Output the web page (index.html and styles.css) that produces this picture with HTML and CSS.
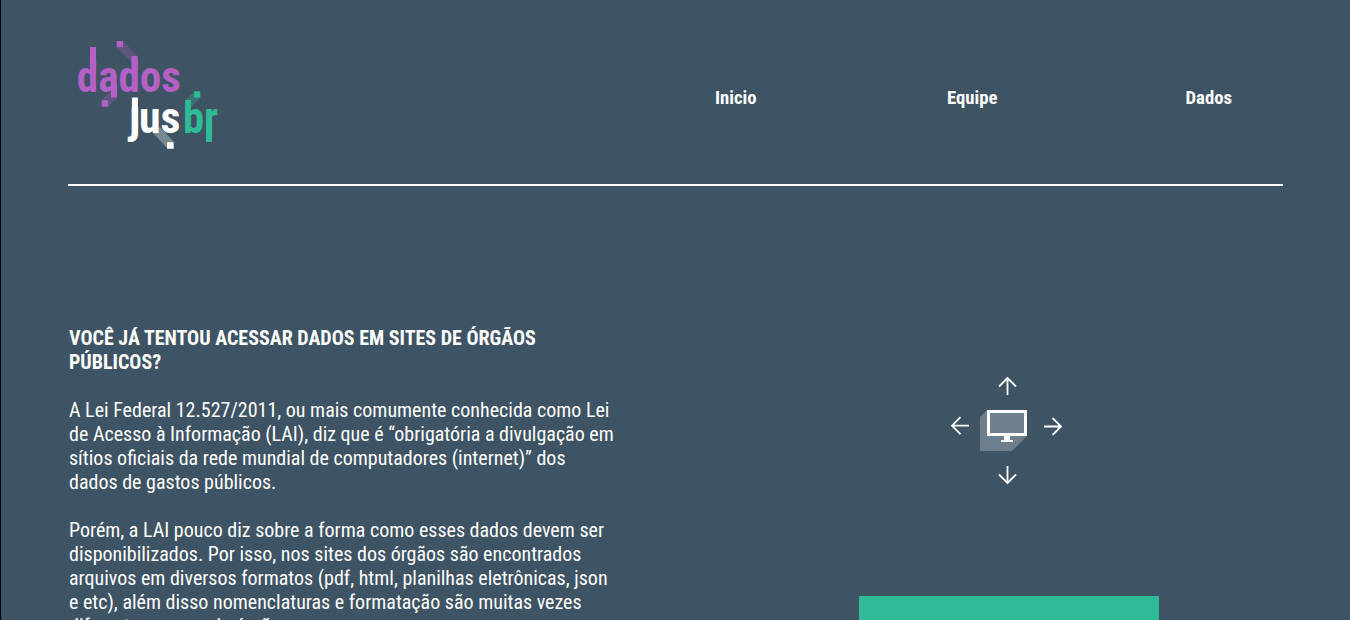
FILE: index.html
```html
<!DOCTYPE html>
<html lang="pt-BR">
<head>
<meta charset="utf-8">
<title>Dados JusBr</title>
<link rel="stylesheet" href="styles.css">
</head>
<body>
<header class="header">
  <svg class="logo" width="170" height="130" viewBox="60 30 170 130" role="img" aria-label="dados jusbr">
    <path class="purple-shade" d="M116.5 47.3 123 41.3 137.7 56V68z"/>
    <path class="purple-shade" d="M101.7 100.3 111 91 117.3 97.3 108 106.7z"/>
    <path class="green-shade" d="M185 100.5 194.3 91.3 200.3 97.7 191 107z"/>
    <path class="white-shade" d="M153 133 160 127 174 142 167 148z"/>
    <g class="purple">
      <path d="M116.7 41H123V47.2H116.7zM101.7 100.3H108V106.7H101.7zM90 47H96V70H90zM111 84H117V97.5H111zM131.5 56H137.6V70H131.5z"/>
      <text x="76.8" y="92" textLength="104" lengthAdjust="spacingAndGlyphs">dados</text>
    </g>
    <g class="white">
      <path d="M167 142.2H173.7V148.7H167zM131.9 97.5H137.9V115H131.9z"/>
      <text class="jota" x="128.5" y="132.5">ȷ</text>
      <text x="139" y="133" textLength="41.5" lengthAdjust="spacingAndGlyphs">us</text>
    </g>
    <g class="green">
      <path d="M194.2 91.3H200.3V97.7H194.2zM206 120H212V142H206z"/>
      <text x="183" y="133" textLength="35.2" lengthAdjust="spacingAndGlyphs">br</text>
    </g>
  </svg>
  <nav class="nav"><a>Inicio</a><a>Equipe</a><a>Dados</a></nav>
</header>
<main class="main">
  <section class="copy">
    <h3>VOCÊ JÁ TENTOU ACESSAR DADOS EM SITES DE ÓRGÃOS PÚBLICOS?</h3>
    <p>A Lei Federal 12.527/2011, ou mais comumente conhecida como Lei de Acesso à Informação (LAI), diz que é “obrigatória a divulgação em sítios oficiais da rede mundial de computadores (internet)” dos dados de gastos públicos.</p>
    <p>Porém, a LAI pouco diz sobre a forma como esses dados devem ser disponibilizados. Por isso, nos sites dos órgãos são encontrados arquivos em diversos formatos (pdf, html, planilhas eletrônicas, json e etc), além disso nomenclaturas e formatação são muitas vezes diferentes para cada órgão.</p>
  </section>
  <section class="visual">
    <svg class="diagram" width="150" height="130" viewBox="930 365 150 130" aria-hidden="true">
      <path class="screen-shade" d="M987 410H1027V436L1012 451H980V417z"/>
      <path class="screen" d="M988.5 411.5H1025.5V434.5H988.5z"/>
      <path class="stand" d="M1004 435H1010V440H1013V442H1001V440H1004z"/>
      <g class="arrows">
        <path d="M1007.5 395V378M999 386.5 1007.5 378 1016 386.5"/>
        <path d="M1007.5 466V483M999 474.5 1007.5 483 1016 474.5"/>
        <path d="M969 425.7H952M960.5 417.2 952 425.7 960.5 434.2"/>
        <path d="M1044 426.5H1061M1052.5 418 1061 426.5 1052.5 435"/>
      </g>
    </svg>
    <div class="panel"></div>
  </section>
</main>
</body>
</html>
```
FILE: styles.css
```css
* { box-sizing: border-box; }
body {
  margin: 0;
  height: 620px;
  overflow: hidden;
  border-left: 1px solid #000;
  padding-left: 67px;
  background: #3e5363;
  color: #fff;
  font-family: "Roboto Condensed", Roboto, sans-serif;
  font-size: 20px;
  line-height: 24px;
}
.header {
  display: flex;
  width: 1215px;
  height: 186px;
  padding-top: 30px;
  border-bottom: 2px solid #fff;
}
.logo { margin-left: -8px; flex: none; }
.logo text { font-size: 44px; font-weight: 700; }
.logo .jota { font-size: 46px; }
.purple { fill: #b361c6; }
.green { fill: #2fbb96; }
.white { fill: #fff; }
.purple-shade { fill: #5c5780; }
.green-shade { fill: #3c7274; }
.white-shade { fill: #798791; }
.nav {
  display: grid;
  grid-template-columns: repeat(3, 236.5px);
  margin-left: 387.5px;
  padding-top: 56px;
  text-align: center;
  font-size: 18.72px;
  font-weight: 700;
}
.main { display: flex; padding: 140px 0 0 1px; }
.copy { width: 547px; }
h3, p { margin: 0 0 24px; font-size: 20px; }
.visual { display: flex; flex-direction: column; align-items: center; width: 300px; margin-left: 243px; padding-top: 39px; }
.diagram { margin-left: -8px; }
.screen-shade { fill: #6e7e8a; }
.screen { fill: none; stroke: #fff; stroke-width: 3; }
.stand { fill: #fff; }
.arrows { fill: none; stroke: #fff; stroke-width: 1.8; }
.panel { width: 300px; height: 60px; margin-top: 101px; border-radius: 1px; background: #2fbb96; }
```
